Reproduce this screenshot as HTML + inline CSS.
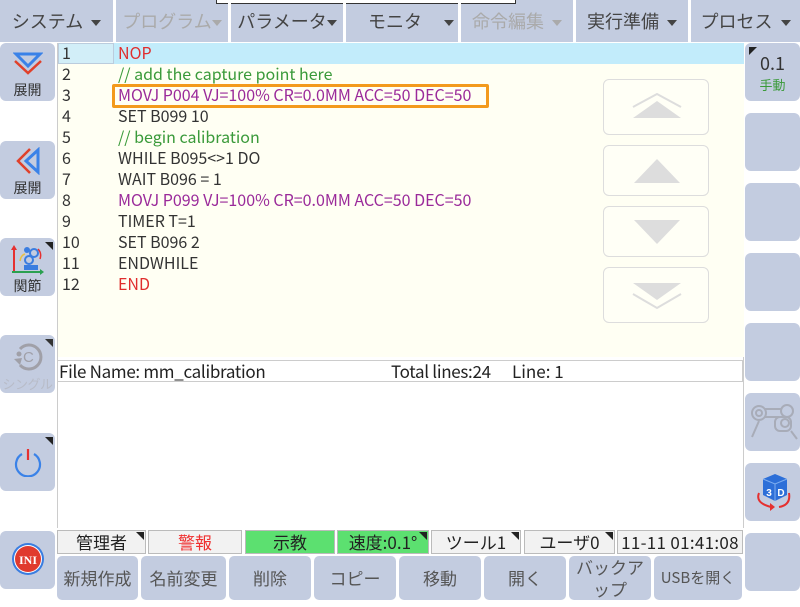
<!DOCTYPE html>
<html><head><meta charset="utf-8"><style>
*{box-sizing:border-box;margin:0;padding:0}
body{width:800px;height:607px;background:#fff;font-family:"Noto Sans CJK JP","Liberation Sans",sans-serif;position:relative;overflow:hidden;color:#333}
.a{position:absolute}
.top{left:0;top:0;width:800px;height:42px;background:#c3cce0}
.menu{top:0;height:42px;font-size:18px;line-height:42px;text-align:center;color:#444;white-space:nowrap}
.sep{top:0;width:3px;height:42px;background:#fff}
.tri{display:inline-block;width:0;height:0;border-left:5px solid transparent;border-right:5px solid transparent;border-top:6px solid #444;vertical-align:middle;margin-left:8px}
.btn{background:#c3cce0;border-radius:6px}
.lbl{font-size:14px;color:#333;text-align:center;width:100%;white-space:nowrap}
.corner{width:0;height:0;border-top:8px solid #222;border-right:8px solid transparent}
.code{left:57px;top:43px;width:687px;height:314px;background:#fffff3;border-left:1px solid #ccc}
.ln{left:62px;font-size:16px;line-height:21px}
.tx{left:118px;font-size:16px;line-height:21px;white-space:nowrap}
.sb{left:603px;width:106px;border:1px solid #ddd;border-radius:6px;background:#fffff6}
.st{top:530px;height:24px;border:1px solid #bbb;background:#f2f2f2;font-size:17px;text-align:center;line-height:22px;color:#222;white-space:nowrap}
.bb{top:556px;height:44px;background:#c3cce0;border-radius:5px;font-size:17px;text-align:center;line-height:44px;color:#555;white-space:nowrap}
</style></head><body>
<div class="a top"></div>
<div class="a" style="left:216px;top:0;width:300px;height:4px;border:1px solid #333;border-top:none;background:#fff"></div>
<div class="a menu" style="left:0;width:113px">システム<span class="tri"></span></div>
<div class="a menu" style="left:116px;width:112px;color:#aaa">プログラム<span class="tri" style="border-top-color:#aaa;margin-left:0"></span></div>
<div class="a menu" style="left:231px;width:112px">パラメータ<span class="tri" style="margin-left:0"></span></div>
<div class="a menu" style="left:368px;width:90px;text-align:left">モニタ<span class="tri" style="margin-left:22px"></span></div>
<div class="a menu" style="left:461px;width:112px;color:#aaa">命令編集<span class="tri" style="border-top-color:#aaa"></span></div>
<div class="a menu" style="left:576px;width:112px">実行準備<span class="tri"></span></div>
<div class="a menu" style="left:691px;width:109px">プロセス<span class="tri"></span></div>
<div class="a sep" style="left:113px"></div><div class="a sep" style="left:228px"></div><div class="a sep" style="left:343px"></div><div class="a sep" style="left:458px"></div><div class="a sep" style="left:573px"></div><div class="a sep" style="left:688px"></div>

<!-- left buttons -->
<div class="a btn" style="left:0;top:43px;width:55px;height:58px">
<svg class="a" style="left:13px;top:8px" width="30" height="24"><path d="M3 3 H27 L15 15 Z" fill="none" stroke="#3a82e8" stroke-width="3"/><path d="M2 10 L15 22 L28 10" fill="none" stroke="#e0402a" stroke-width="2.5"/></svg>
<div class="a lbl" style="top:37px">展開</div></div>
<div class="a btn" style="left:0;top:141px;width:55px;height:58px">
<svg class="a" style="left:16px;top:6px" width="26" height="28"><path d="M22 3 V25 L10 14 Z" fill="none" stroke="#3a82e8" stroke-width="3"/><path d="M14 2 L2 14 L14 26" fill="none" stroke="#e0402a" stroke-width="2.5"/></svg>
<div class="a lbl" style="top:37px">展開</div></div>
<div class="a btn" style="left:0;top:238px;width:55px;height:58px">
<div class="a corner" style="left:45px;top:4px;transform:scaleX(-1)"></div>
<svg class="a" style="left:10px;top:5px" width="36" height="32"><path d="M4 30 V4" stroke="#e53030" stroke-width="2"/><path d="M1 7 L4 2 L7 7Z" fill="#e53030"/><path d="M2 29 H32" stroke="#2aa050" stroke-width="2"/><path d="M30 26 L34 29 L30 32Z" fill="#2aa050"/><rect x="14" y="22" width="14" height="5" fill="#3a7de0"/><circle cx="19" cy="17" r="4" fill="none" stroke="#3a7de0" stroke-width="2"/><circle cx="24" cy="10" r="4" fill="none" stroke="#3a7de0" stroke-width="2"/><circle cx="17" cy="7" r="3" fill="#3a7de0"/><path d="M28 6 Q32 10 30 16" stroke="#e53030" fill="none" stroke-width="1.5"/><path d="M10 18 Q11 12 15 11" stroke="#e8c040" fill="none" stroke-width="1.5"/></svg>
<div class="a lbl" style="top:38px">関節</div></div>
<div class="a btn" style="left:0;top:335px;width:55px;height:58px">
<div class="a corner" style="left:45px;top:4px;transform:scaleX(-1);border-top-color:#333"></div>
<svg class="a" style="left:10px;top:4px" width="36" height="34"><path d="M10 10 A12 12 0 1 1 10 26" fill="none" stroke="#a0a0a8" stroke-width="3"/><path d="M4 20 L10 26 L12 19" fill="#a0a0a8"/><circle cx="9" cy="15" r="2.5" fill="#a0a0a8"/><text x="13" y="23" font-size="15" fill="#a0a0a8" font-family="Liberation Sans">C</text></svg>
<div class="a lbl" style="top:39px;color:#b8bcc8;font-size:13px;letter-spacing:-0.5px">シングル</div></div>
<div class="a btn" style="left:0;top:433px;width:55px;height:58px">
<div class="a corner" style="left:45px;top:4px;transform:scaleX(-1)"></div>
<svg class="a" style="left:14px;top:14px" width="28" height="30"><path d="M8 7 A12 12 0 1 0 20 7" fill="none" stroke="#3a82e8" stroke-width="2.2"/><path d="M14 2 V13" stroke="#e53030" stroke-width="2.2"/></svg></div>
<div class="a btn" style="left:0;top:531px;width:55px;height:58px">
<svg class="a" style="left:11px;top:11px" width="34" height="34"><circle cx="17" cy="17" r="16" fill="#3a7de0"/><circle cx="17" cy="17" r="14" fill="#fff"/><circle cx="17" cy="17" r="13" fill="#e03a2e"/><text x="17" y="22" font-size="12" font-weight="bold" fill="#fff" text-anchor="middle" font-family="Liberation Serif">INI</text></svg></div>

<!-- right buttons -->
<div class="a btn" style="left:745px;top:43px;width:55px;height:58px"><div class="a corner" style="left:4px;top:4px"></div><div class="a" style="width:55px;top:7px;text-align:center;font-size:18px;color:#333">0.1</div><div class="a" style="width:55px;top:32px;text-align:center;font-size:13px;color:#3a9a3a">手動</div></div>
<div class="a btn" style="left:745px;top:113px;width:55px;height:58px"></div>
<div class="a btn" style="left:745px;top:183px;width:55px;height:58px"></div>
<div class="a btn" style="left:745px;top:253px;width:55px;height:58px"></div>
<div class="a btn" style="left:745px;top:323px;width:55px;height:58px"></div>
<div class="a btn" style="left:745px;top:393px;width:55px;height:58px">
<svg class="a" style="left:2px;top:8px" width="52" height="40"><g fill="none" stroke="#a8acb8" stroke-width="2"><circle cx="12" cy="12" r="7"/><circle cx="12" cy="12" r="3"/><path d="M18 8 H34 M18 16 H32"/><circle cx="40" cy="10" r="6"/><rect x="28" y="16" width="16" height="14" rx="5"/><circle cx="38" cy="22" r="4"/><path d="M5 36 L12 20 M44 30 L50 38"/></g></svg></div>
<div class="a btn" style="left:745px;top:463px;width:55px;height:58px">
<svg class="a" style="left:8px;top:8px" width="40" height="44"><path d="M10 8 L22 3 L34 8 L34 24 L22 30 L10 24Z" fill="#2d6fd8"/><path d="M10 8 L22 13 L34 8 M22 13 V30" stroke="#7eaef0" stroke-width="1" fill="none"/><text x="16" y="25" font-size="10" font-weight="bold" fill="#fff" text-anchor="middle" font-family="Liberation Sans">3</text><text x="28" y="25" font-size="10" font-weight="bold" fill="#fff" text-anchor="middle" font-family="Liberation Sans">D</text><path d="M6 22 Q2 32 18 36 M26 36 Q38 34 36 22" fill="none" stroke="#e53030" stroke-width="2"/><path d="M17 32 L22 36 L17 40Z" fill="#e53030"/></svg></div>
<div class="a btn" style="left:745px;top:533px;width:55px;height:58px"></div>

<!-- code -->
<div class="a code"></div>
<div class="a" style="left:58px;top:43px;width:686px;height:21px;background:#c2ecfb"></div>
<div class="a" style="left:58px;top:43px;width:56px;height:21px;background:#d2eef8;border:1px solid #bcd"></div>
<div class="a" style="left:112px;top:84px;width:377px;height:24px;border:3px solid #f39a1c;border-radius:2px"></div>
<div class="a ln" style="top:42px">1<br>2<br>3<br>4<br>5<br>6<br>7<br>8<br>9<br>10<br>11<br>12</div>
<div class="a tx" style="top:42px;color:#e02d2d">NOP</div>
<div class="a tx" style="top:63px;color:#3a9a3a">// add the capture point here</div>
<div class="a tx" style="top:84px;color:#9a2a9a">MOVJ P004 VJ=100% CR=0.0MM ACC=50 DEC=50</div>
<div class="a tx" style="top:105px">SET B099 10</div>
<div class="a tx" style="top:126px;color:#3a9a3a">// begin calibration</div>
<div class="a tx" style="top:147px">WHILE B095&lt;&gt;1 DO</div>
<div class="a tx" style="top:168px">WAIT B096 = 1</div>
<div class="a tx" style="top:189px;color:#9a2a9a">MOVJ P099 VJ=100% CR=0.0MM ACC=50 DEC=50</div>
<div class="a tx" style="top:210px">TIMER T=1</div>
<div class="a tx" style="top:231px">SET B096 2</div>
<div class="a tx" style="top:252px">ENDWHILE</div>
<div class="a tx" style="top:273px;color:#e02d2d">END</div>

<div class="a sb" style="top:79px;height:56px"><svg class="a" style="left:27px;top:13px" width="52" height="28"><path d="M2 14 L26 1 L50 14" fill="none" stroke="#ddd" stroke-width="2"/><path d="M2 25 L26 8 L50 25Z" fill="#ddd"/></svg></div>
<div class="a sb" style="top:145px;height:51px"><svg class="a" style="left:28px;top:12px" width="50" height="26"><path d="M2 25 L25 1 L48 25Z" fill="#ddd"/></svg></div>
<div class="a sb" style="top:206px;height:51px"><svg class="a" style="left:28px;top:12px" width="50" height="26"><path d="M2 1 L25 25 L48 1Z" fill="#ddd"/></svg></div>
<div class="a sb" style="top:267px;height:56px"><svg class="a" style="left:27px;top:14px" width="52" height="28"><path d="M2 1 L26 18 L50 1Z" fill="#ddd"/><path d="M2 12 L26 26 L50 12" fill="none" stroke="#ddd" stroke-width="2"/></svg></div>

<div class="a" style="left:57px;top:357px;width:687px;height:171px;border-left:1px solid #ccc;border-right:1px solid #ccc;background:#fff"></div>
<div class="a" style="left:57px;top:360px;width:686px;height:22px;border:1px solid #ccc;font-size:17px;line-height:20px;color:#222;white-space:nowrap"><span class="a" style="left:1px;letter-spacing:-0.3px">File Name: mm_calibration</span><span class="a" style="left:333px;letter-spacing:-0.3px">Total lines:24</span><span class="a" style="left:454px">Line: 1</span></div>

<!-- status -->
<div class="a st" style="left:57px;width:89px">管理者<div class="a corner" style="right:1px;top:1px;transform:scaleX(-1)"></div></div>
<div class="a st" style="left:148px;width:94px;color:#f03030">警報</div>
<div class="a st" style="left:245px;width:90px;background:#5ce070">示教</div>
<div class="a st" style="left:337px;width:92px;background:#5ce070">速度:0.1°<div class="a corner" style="right:1px;top:1px;transform:scaleX(-1)"></div></div>
<div class="a st" style="left:431px;width:90px">ツール1<div class="a corner" style="right:1px;top:1px;transform:scaleX(-1)"></div></div>
<div class="a st" style="left:524px;width:91px">ユーザ0<div class="a corner" style="right:1px;top:1px;transform:scaleX(-1)"></div></div>
<div class="a st" style="left:617px;width:126px;letter-spacing:0.3px">11-11 01:41:08</div>

<div class="a bb" style="left:57px;width:81px">新規作成</div>
<div class="a bb" style="left:141px;width:85px">名前変更</div>
<div class="a bb" style="left:229px;width:82px">削除</div>
<div class="a bb" style="left:314px;width:82px">コピー</div>
<div class="a bb" style="left:399px;width:82px">移動</div>
<div class="a bb" style="left:484px;width:82px">開く</div>
<div class="a bb" style="left:569px;width:82px;line-height:22px">バックア<br>ップ</div>
<div class="a bb" style="left:654px;width:88px;font-size:15px">USBを開く</div>
</body></html>
